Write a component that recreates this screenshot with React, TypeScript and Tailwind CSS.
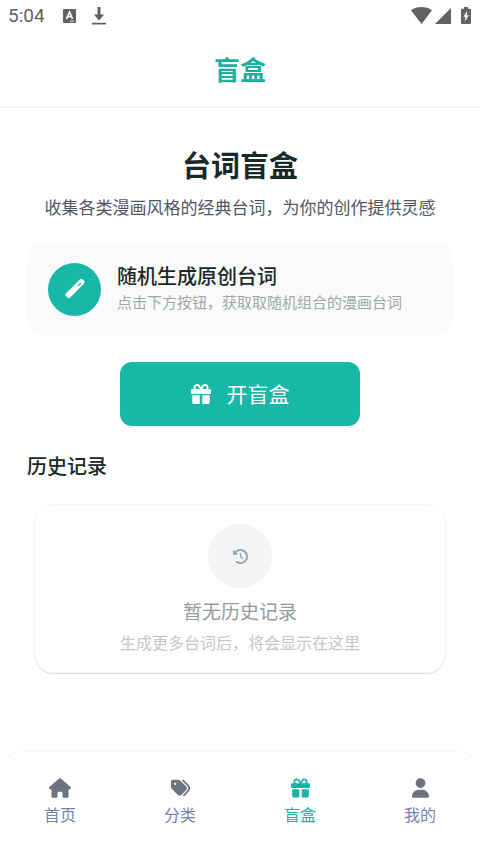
import type { IconType } from 'react-icons'
import {
  FaClockRotateLeft,
  FaGift,
  FaHouse,
  FaTags,
  FaUser,
} from 'react-icons/fa6'

type Tab = {
  label: string
  icon: IconType
  width: string
  active?: boolean
}

const tabs: Tab[] = [
  { label: '首页', icon: FaHouse, width: 'w-[22px]' },
  { label: '分类', icon: FaTags, width: 'w-[19px]' },
  { label: '盲盒', icon: FaGift, width: 'w-[19px]', active: true },
  { label: '我的', icon: FaUser, width: 'w-[17px]' },
]

const StatusBar = () => (
  <div className="flex h-8 items-center justify-between px-2 text-[#616161]">
    <div className="flex items-center">
      <span className="font-[Roboto] text-[19px] leading-6">5:04</span>
      <svg className="ml-[18px]" width="13" height="14" viewBox="0 0 13 14">
        <rect width="13" height="14" rx="1" fill="currentColor" />
        <path d="M3.5 10 6.5 3 9.5 10M4.6 7.8h3.8" fill="none" stroke="#fff" strokeWidth="1.6" />
        <path d="M7 12.2h4" stroke="#fff" strokeWidth="0.8" />
      </svg>
      <svg className="ml-4" width="14" height="18" viewBox="0 0 14 18" fill="currentColor">
        <path d="M5.5 0h3v7.5h3.7L7 13.5 1.8 7.5h3.7zM0 15.8h14v1.8H0z" />
      </svg>
    </div>
    <div className="flex items-center">
      <svg width="21" height="18" viewBox="0 0 21 18" fill="currentColor">
        <path d="M0 3.2C6-1 15-1 21 3.2L10.5 17z" />
      </svg>
      <svg className="ml-[3px]" width="16" height="18" viewBox="0 0 16 18" fill="currentColor">
        <path d="M16 1v16H0z" />
      </svg>
      <svg className="ml-[10px]" width="11" height="18" viewBox="0 0 11 18">
        <path d="M3 0h4v1.700h2q1 0 1 1V16q0 1-1 1H1q-1 0-1-1V2.700q0-1 1-1h2z" fill="currentColor" />
        <path d="M6.3 3.8 2.3 9.8h2.1L3.7 14.5 7.9 8.3H5.7z" fill="#fff" />
      </svg>
    </div>
  </div>
)

const Header = () => (
  <header className="flex h-[76px] items-center justify-center border-b-2 border-[#f2f3f3]">
    <h1 className="text-[26px] leading-9 font-bold text-[#1cb0a0]">盲盒</h1>
  </header>
)

const WandIcon = () => (
  <svg width="20" height="20" viewBox="0 0 20 20" fill="none">
    <rect x="-1.7" y="6.6" width="23.4" height="5.8" rx="2" transform="rotate(-45 10 9.5)" fill="#fff" />
    <path d="M13.4 6.600 15.6 4.400" stroke="#18b7a7" strokeWidth="1.2" strokeLinecap="round" />
  </svg>
)

const HistorySection = () => (
  <section className="mt-6">
    <h3 className="text-xl leading-8 font-medium text-[#1a2926]">历史记录</h3>
    <div className="mx-[7px] mt-[22px] flex flex-col items-center rounded-[20px] border border-[#f6f7f7] pt-[19px] pb-[14px] shadow-[0_1px_1px_rgba(0,0,0,0.15)]">
      <div className="flex size-16 items-center justify-center rounded-full bg-[#f3f4f6] text-[#9ca3af]">
        <FaClockRotateLeft size={15} />
      </div>
      <p className="mt-2 text-[19px] leading-[30px] text-[#929b99]">暂无历史记录</p>
      <p className="text-base leading-8 text-[#c1c8c6]">生成更多台词后，将会显示在这里</p>
    </div>
  </section>
)

const TabBar = () => (
  <nav className="flex h-[101px] rounded-t-[24px] border-t border-[#f6f7f7] pt-[26px] shadow-[0_0_2px_rgba(0,0,0,0.05)]">
    {tabs.map(({ label, icon: Icon, width, active }) => (
      <a
        key={label}
        href="#"
        aria-current={active ? 'page' : undefined}
        className={`flex flex-1 flex-col items-center ${active ? 'text-[#18b5a4]' : 'text-[#7682ae]'}`}
      >
        <Icon className={`h-5 ${width} ${active ? 'text-[#18b5a4]' : 'text-[#6b7280]'}`} />
        <span className="text-base leading-8">{label}</span>
      </a>
    ))}
  </nav>
)

const App = () => {
  return (
    <div className="flex min-h-screen flex-col bg-white font-['Noto_Sans_CJK_SC',sans-serif]">
      <StatusBar />
      <Header />
      <main className="flex-1 px-[27px] pt-[34px]">
        <h2 className="text-center text-[29px] leading-11 font-bold text-[#1a2926]">台词盲盒</h2>
        <p className="mt-[5px] text-center text-[17px] leading-8 whitespace-nowrap text-[#4f5666]">
          收集各类漫画风格的经典台词，为你的创作提供灵感
        </p>

        <section className="mt-5 flex h-[92px] items-center rounded-2xl bg-[#f9fafb] px-[21px]">
          <div className="flex size-[53px] shrink-0 items-center justify-center rounded-full bg-[#18b7a7]">
            <WandIcon />
          </div>
          <div className="ml-4 pb-0.5">
            <h3 className="text-xl leading-7 font-medium text-[#1a2926]">随机生成原创台词</h3>
            <p className="text-[15px] leading-6 text-[#a0a8a6]">点击下方按钮，获取取随机组合的漫画台词</p>
          </div>
        </section>

        <button
          type="button"
          className="mx-auto mt-[27px] flex h-16 w-60 items-center justify-center gap-4 rounded-xl bg-[#18b7a7] text-[21px] text-white"
        >
          <FaGift size={20} />
          开盲盒
        </button>

        <HistorySection />
      </main>
      <TabBar />
    </div>
  )
}

export default App
